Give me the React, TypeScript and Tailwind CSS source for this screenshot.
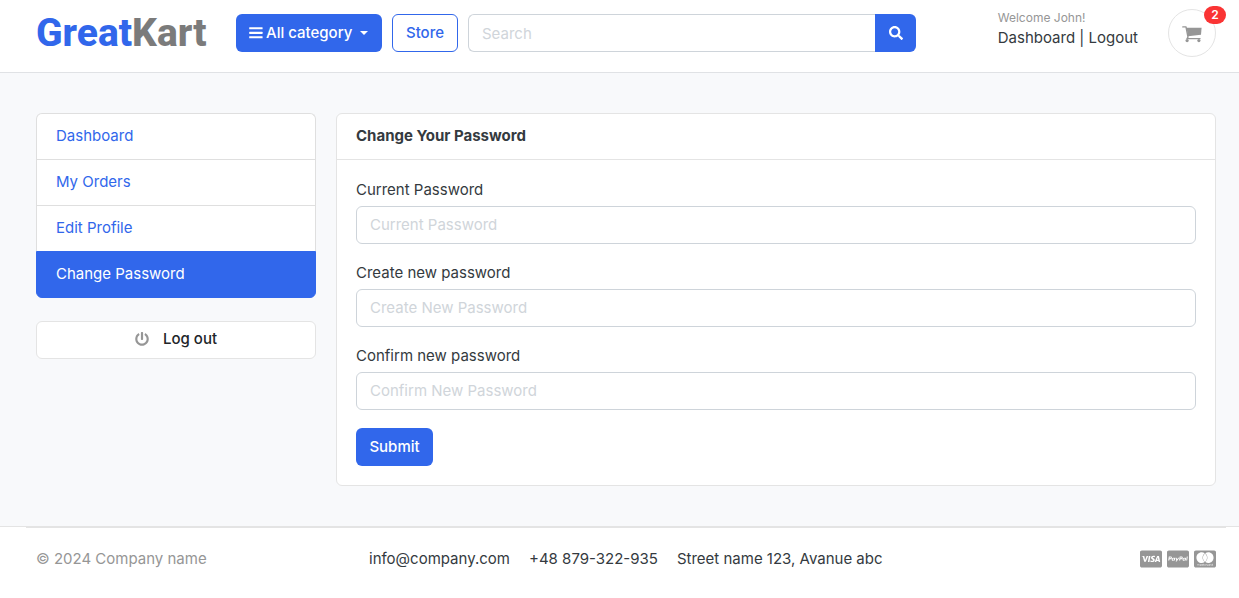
import React from "react";
import { FaSearch, FaPowerOff, FaCcVisa, FaCcPaypal, FaCcMastercard } from "react-icons/fa";

const menu = [
  { label: "Dashboard", active: false },
  { label: "My Orders", active: false },
  { label: "Edit Profile", active: false },
  { label: "Change Password", active: true },
];

const fields = [
  { id: "current", label: "Current Password", placeholder: "Current Password" },
  { id: "create", label: "Create new password", placeholder: "Create New Password" },
  { id: "confirm", label: "Confirm new password", placeholder: "Confirm New Password" },
];

function BarsIcon() {
  return (
    <svg viewBox="0 0 14 14" fill="currentColor" className="mr-[3px] size-3.5" aria-hidden="true">
      <rect x="0.2" y="1.2" width="13.4" height="2.1" rx="0.4" />
      <rect x="0.2" y="5.8" width="13.4" height="2.1" rx="0.4" />
      <rect x="0.2" y="10.2" width="13.4" height="2.1" rx="0.4" />
    </svg>
  );
}

function CartIcon() {
  return (
    <svg viewBox="0 0 20 20" fill="currentColor" className="size-5" aria-hidden="true">
      <path d="M4.6 4.8 19.6 4.8 19 11.8 6 13.2Z" />
      <path d="M0.8 3.9H4L6 14.2 5 15.6H18" fill="none" stroke="currentColor" strokeWidth="1.4" strokeLinecap="round" strokeLinejoin="round" />
      <circle cx="5.1" cy="17.6" r="1.6" />
      <circle cx="16.9" cy="17.6" r="1.6" />
    </svg>
  );
}

function Header() {
  return (
    <header className="border-b border-[#e0e2e5] bg-white">
      <div className="flex h-[72px] items-start pr-[23px] pl-9">
        <a href="#" className="mt-[9px] w-[200px] shrink-0 font-['Roboto',sans-serif] text-[39px] leading-12 font-extrabold text-[#3167eb]">
          Great<span className="text-[#7b7b7b]">Kart</span>
        </a>
        <div className="mt-3.5 flex h-[38px] w-[680px] gap-2.5">
          <button type="button" className="flex w-[146px] shrink-0 items-center rounded-md bg-[#3167eb] pl-[13px] font-medium text-white">
            <BarsIcon />
            All category
            <span className="ml-2 border-x-4 border-t-4 border-x-transparent border-t-white" />
          </button>
          <button type="button" className="w-[66px] shrink-0 rounded-md border border-[#3167eb] font-medium text-[#3167eb]">Store</button>
          <form className="flex min-w-0 grow">
            <input type="search" aria-label="Search" placeholder="Search" className="min-w-0 grow rounded-l-md border border-r-0 border-[#ced4da] px-[13px] pt-0.5 outline-none placeholder:text-[#d0d5da]" />
            <button type="submit" aria-label="Search" className="flex w-[41px] items-center justify-center rounded-r-md bg-[#3167eb] text-white">
              <FaSearch className="size-3.5" />
            </button>
          </form>
        </div>
        <div className="mt-[9px] ml-auto flex gap-[30px]">
          <div>
            <small className="block text-xs leading-[18px] text-[#969696]">Welcome John!</small>
            <div className="leading-[22px] whitespace-nowrap">
              <a href="#">Dashboard</a> | <a href="#">Logout</a>
            </div>
          </div>
          <a href="#" aria-label="Cart" className="relative flex size-12 items-center justify-center rounded-full border border-[#e4e4e4] text-[#969696]">
            <CartIcon />
            <span className="absolute -top-1 -right-[11px] flex h-[18px] w-[22px] items-center justify-center rounded-full bg-[#fa3434] text-xs font-semibold text-white">2</span>
          </a>
        </div>
      </div>
    </header>
  );
}

export default function App() {
  return (
    <div className="min-h-screen bg-white font-['Inter',sans-serif] text-[15px] leading-[22px] text-[#343a40]">
      <Header />
      <main className="flex items-start gap-5 bg-[#f8f9fb] pt-10 pr-[23px] pb-10 pl-9">
        <aside className="w-[280px] shrink-0">
          <nav>
            {menu.map((m) => (
              <a
                key={m.label}
                href="#"
                className={
                  m.active
                    ? "block rounded-b-md border border-[#3167eb] bg-[#3167eb] px-[19px] pt-[11px] pb-3 text-white"
                    : "block border border-b-0 border-[#dfdfdf] bg-white px-[19px] pt-[11px] pb-3 text-[#3167eb] first:rounded-t-md"
                }
              >
                {m.label}
              </a>
            ))}
          </nav>
          <button type="button" className="mt-[23px] flex h-[38px] w-full items-center justify-center rounded-md border border-[#e4e4e4] bg-white pb-0.5 font-medium text-[#212529]">
            <FaPowerOff className="mr-3.5 size-3.5 text-[#969696]" />
            Log out
          </button>
        </aside>
        <section className="min-w-0 grow rounded-md border border-[#e4e4e4] bg-white">
          <h1 className="border-b border-[#e4e4e4] px-[19px] pt-[11px] pb-3 font-bold">Change Your Password</h1>
          <form className="p-[19px]">
            {fields.map((f) => (
              <div key={f.id} className="mb-[18px]">
                <label htmlFor={f.id} className="mb-[5px] block">{f.label}</label>
                <input id={f.id} type="password" placeholder={f.placeholder} className="block h-[38px] w-full rounded-md border border-[#ced4da] px-[13px] pb-0.5 outline-none placeholder:text-[#d0d5da]" />
              </div>
            ))}
            <button type="submit" className="block h-[38px] w-[77px] rounded-md bg-[#3167eb] font-medium text-white">Submit</button>
          </form>
        </section>
      </main>
      <footer className="border-t border-[#e4e4e4] pr-[13px] pl-[26px]">
        <div className="flex items-center border-t border-[#e4e4e4] px-2.5 pt-5 pb-6">
          <p className="w-[333px] text-[#969696]">© 2024 Company name</p>
          <ul className="flex grow gap-[19px]">
            <li>info@company.com</li>
            <li>+48 879-322-935</li>
            <li>Street name 123, Avanue abc</li>
          </ul>
          <div className="flex gap-[5px] text-[#969696]">
            <FaCcVisa className="h-[22px] w-[22px]" />
            <FaCcPaypal className="h-[22px] w-[22px]" />
            <FaCcMastercard className="h-[22px] w-[22px]" />
          </div>
        </div>
      </footer>
    </div>
  );
}
